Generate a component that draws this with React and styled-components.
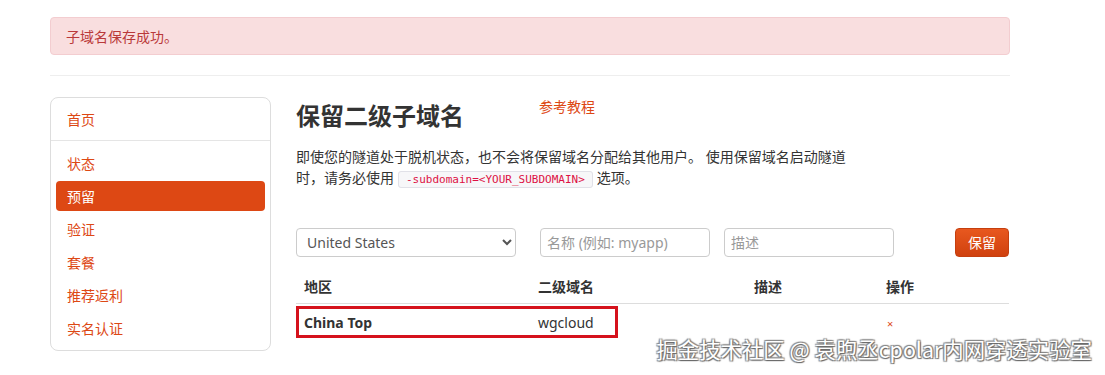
import React from 'react';
import styled, { createGlobalStyle } from 'styled-components';

const GlobalStyle = createGlobalStyle`
    body {
        margin: 0;
        background: #fff;
        font-family: "Noto Sans", "Noto Sans CJK SC", sans-serif;
        font-size: 14px;
        color: #333;
    }
`;

const ORANGE = '#dd4814';

const menu = ['状态', '预留', '验证', '套餐', '推荐返利', '实名认证'];

const App = () => {
    return (
        <Page>
            <GlobalStyle />
            <Alert>子域名保存成功。</Alert>
            <Rule />
            <Layout>
                <Sidebar>
                    <NavItem>首页</NavItem>
                    <NavDivider />
                    {menu.map((item) => (
                        <NavItem key={item} active={item === '预留'}>{item}</NavItem>
                    ))}
                </Sidebar>
                <Main>
                    <TitleRow>
                        <Title>保留二级子域名</Title>
                        <GuideLink>参考教程</GuideLink>
                    </TitleRow>
                    <Lead>
                        即使您的隧道处于脱机状态，也不会将保留域名分配给其他用户。 使用保留域名启动隧道时，请务必使用
                        <Code>-subdomain=&lt;YOUR_SUBDOMAIN&gt;</Code>选项。
                    </Lead>
                    <Form>
                        <Select defaultValue="us">
                            <option value="us">United States</option>
                        </Select>
                        <Input width={170} placeholder="名称 (例如: myapp)" />
                        <Input width={170} placeholder="描述" />
                        <Button>保留</Button>
                    </Form>
                    <Table>
                        <colgroup>
                            <col style={{ width: 234 }} />
                            <col style={{ width: 216 }} />
                            <col style={{ width: 132 }} />
                            <col />
                        </colgroup>
                        <thead>
                            <tr>
                                <Th>地区</Th>
                                <Th>二级域名</Th>
                                <Th>描述</Th>
                                <Th>操作</Th>
                            </tr>
                        </thead>
                        <tbody>
                            <tr>
                                <Td bold>China Top</Td>
                                <Td>wgcloud</Td>
                                <Td></Td>
                                <Td><Remove>×</Remove></Td>
                            </tr>
                        </tbody>
                    </Table>
                    <Highlight />
                </Main>
            </Layout>
            <Watermark>掘金技术社区 @ 袁煦丞cpolar内网穿透实验室</Watermark>
        </Page>
    );
};

export default App;

const Page = styled.div`
    position: relative;
    width: 1105px;
    height: 375px;
    overflow: hidden;
    padding: 17px 0 0 50px;
    box-sizing: border-box;
`;

const Alert = styled.div`
    width: 960px;
    height: 38px;
    box-sizing: border-box;
    padding: 0 15px;
    display: flex;
    align-items: center;
    background: #f9dedf;
    border: 1px solid #f3cdd0;
    border-radius: 4px;
    color: #b9393a;
    font-size: 14px;
`;

const Rule = styled.div`
    width: 960px;
    height: 1px;
    background: #eeeeee;
    margin: 20px 0 21px;
`;

const Layout = styled.div`
    display: flex;
    gap: 25px;
`;

const Sidebar = styled.div`
    width: 221px;
    height: 254px;
    box-sizing: border-box;
    border: 1px solid #dddddd;
    border-radius: 8px;
    padding: 6px 5px;
    display: flex;
    flex-direction: column;
`;

const NavItem = styled.div`
    flex-shrink: 0;
    height: 30px;
    margin-bottom: 3px;
    padding-left: 11px;
    display: flex;
    align-items: center;
    border-radius: 4px;
    font-size: 14px;
    color: ${(p) => (p.active ? '#fff' : ORANGE)};
    background: ${(p) => (p.active ? ORANGE : 'transparent')};
`;

const NavDivider = styled.div`
    flex-shrink: 0;
    height: 1px;
    background: #e5e5e5;
    margin: 3px -5px 7px;
`;

const Main = styled.div`
    position: relative;
    width: 713px;
`;

const TitleRow = styled.div`
    display: flex;
    align-items: flex-start;
    height: 49px;
`;

const Title = styled.h1`
    margin: 4px 0 0;
    font-size: 24px;
    font-weight: 700;
    color: #333;
    line-height: 30px;
`;

const GuideLink = styled.a`
    margin-left: 75px;
    font-size: 14px;
    color: ${ORANGE};
    line-height: 20px;
`;

const Lead = styled.p`
    margin: 0;
    width: 560px;
    font-size: 14px;
    line-height: 21px;
    color: #333;
`;

const Code = styled.code`
    margin: 0 4px;
    padding: 1px 7px;
    font-family: "DejaVu Sans Mono", "Liberation Mono", monospace;
    font-size: 11px;
    color: #d14;
    background: #f7f7f9;
    border: 1px solid #e1e1e8;
    border-radius: 3px;
`;

const Form = styled.div`
    display: flex;
    align-items: center;
    margin-top: 38px;
    height: 28px;
`;

const Select = styled.select`
    width: 220px;
    height: 29px;
    margin-right: 24px;
    padding: 0 6px;
    font-family: "Noto Sans", sans-serif;
    font-size: 14px;
    color: #555;
    background: #fff;
    border: 1px solid #ccc;
    border-radius: 4px;
`;

const Input = styled.input`
    width: ${(p) => p.width}px;
    height: 29px;
    box-sizing: border-box;
    margin-right: 14px;
    padding: 0 6px;
    font-family: "Noto Sans", "Noto Sans CJK SC", sans-serif;
    font-size: 14px;
    border: 1px solid #ccc;
    border-radius: 4px;
    &::placeholder {
        color: #999;
    }
`;

const Button = styled.button`
    margin-left: auto;
    width: 54px;
    height: 29px;
    border: 1px solid #c53f0f;
    border-radius: 4px;
    background: linear-gradient(#e8581f, #d0410e);
    color: #fff;
    font-family: "Noto Sans CJK SC", sans-serif;
    font-size: 14px;
`;

const Table = styled.table`
    width: 713px;
    margin-top: 12px;
    border-collapse: collapse;
    table-layout: fixed;
`;

const Th = styled.th`
    height: 35px;
    padding: 0 8px;
    text-align: left;
    font-weight: 700;
    font-size: 14px;
    color: #333;
    border-bottom: 1px solid #dddddd;
`;

const Td = styled.td`
    height: 36px;
    padding: 0 8px;
    font-size: 14px;
    font-weight: ${(p) => (p.bold ? 700 : 400)};
    color: #333;
`;

const Remove = styled.span`
    color: ${ORANGE};
    font-size: 11px;
    padding-left: 1px;
`;

const Highlight = styled.div`
    position: absolute;
    left: 0;
    top: 209px;
    width: 322px;
    height: 32px;
    box-sizing: border-box;
    border: 3px solid #d5121c;
    pointer-events: none;
`;

const Watermark = styled.div`
    position: absolute;
    right: 13px;
    bottom: 11px;
    font-family: "Noto Sans CJK SC", sans-serif;
    font-size: 21.4px;
    color: #fff;
    text-shadow: 1px 1px 1px #666, -1px -1px 1px #888, 1px -1px 1px #888, -1px 1px 1px #888;
`;
